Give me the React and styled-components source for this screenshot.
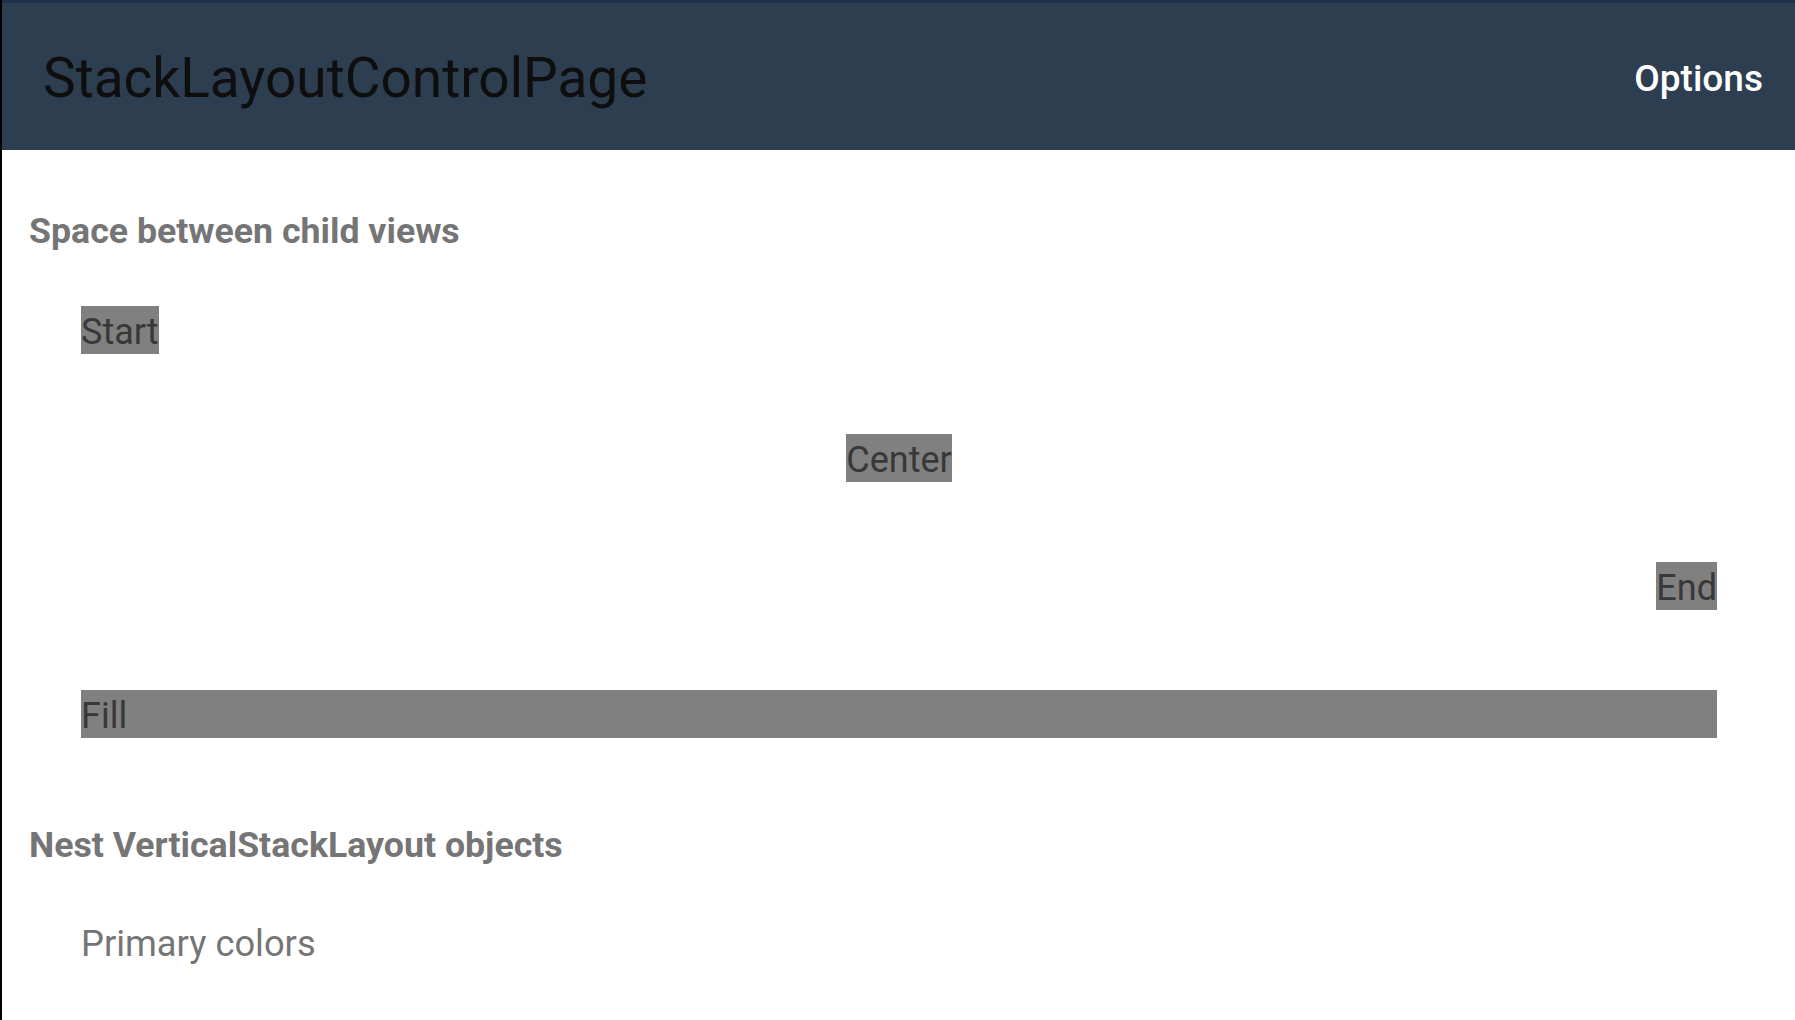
import React from "react";
import styled, { createGlobalStyle } from "styled-components";

const Global = createGlobalStyle`
  html, body { margin: 0; padding: 0; background: #ffffff; }
  body { font-family: Roboto, "Noto Sans", "Liberation Sans", sans-serif; }
  * { box-sizing: border-box; }
`;

const Page = styled.div`
  display: flex;
  flex-direction: column;
  min-height: 100vh;
  border-left: 2px solid #000000;
  background: #ffffff;
  overflow: hidden;
`;

const Header = styled.header`
  height: 150px;
  flex: none;
  display: flex;
  align-items: center;
  justify-content: space-between;
  padding: 3px 32px 0 41px;
  background: #2d3e50;
  border-top: 3px solid #1d324a;
`;

const Title = styled.h1`
  margin: 0;
  font-family: Roboto, "Liberation Sans", sans-serif;
  font-weight: 400;
  font-size: 55px;
  line-height: 1;
  color: #0e0e0e;
`;

const ToolbarItem = styled.span`
  font-family: Roboto, "Liberation Sans", sans-serif;
  font-weight: 500;
  font-size: 37px;
  color: #ffffff;
`;

const Main = styled.main`
  display: flex;
  flex-direction: column;
  padding: 61px 78px 0 27px;
`;

const SectionTitle = styled.h2`
  margin: 0 0 55px 0;
  font-family: Roboto, "Liberation Sans", sans-serif;
  font-weight: 700;
  font-size: 35.7px;
  line-height: 40px;
  color: #757575;
`;

const Stack = styled.div`
  display: flex;
  flex-direction: column;
  align-items: flex-start;
  gap: ${(p) => p.$gap || 0}px;
  margin-left: 52px;
  margin-bottom: ${(p) => p.$after || 0}px;
`;

const Box = styled.div`
  align-self: ${(p) => p.$align};
  background: #808080;
  color: #383838;
  font-family: Roboto, "Liberation Sans", sans-serif;
  font-size: 36px;
  line-height: 48px;
  height: 48px;
  padding-top: 2px;
  white-space: nowrap;
`;

const Plain = styled.div`
  font-family: Roboto, "Liberation Sans", sans-serif;
  font-size: 36.3px;
  line-height: 48px;
  color: #757575;
`;

export default function App() {
  return (
    <>
      <Global />
      <Page>
        <Header>
          <Title>StackLayoutControlPage</Title>
          <ToolbarItem>Options</ToolbarItem>
        </Header>
        <Main>
          <SectionTitle>Space between child views</SectionTitle>
          <Stack $gap={80} $after={87}>
            <Box $align="flex-start">Start</Box>
            <Box $align="center">Center</Box>
            <Box $align="flex-end">End</Box>
            <Box $align="stretch">Fill</Box>
          </Stack>
          <SectionTitle>Nest VerticalStackLayout objects</SectionTitle>
          <Stack>
            <Plain>Primary colors</Plain>
          </Stack>
        </Main>
      </Page>
    </>
  );
}
